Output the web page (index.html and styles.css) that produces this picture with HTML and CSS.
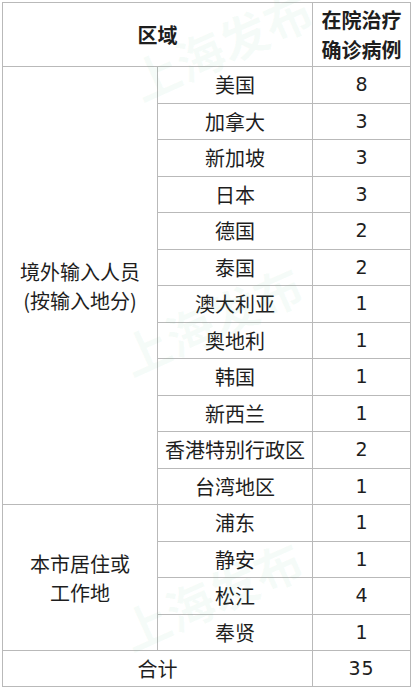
FILE: index.html
```html
<!DOCTYPE html>
<html lang="zh-CN">
<head>
<meta charset="utf-8">
<link rel="stylesheet" href="styles.css">
</head>
<body>
<div class="wrap">
<table class="tbl">
  <colgroup><col class="c1"><col class="c2"><col class="c3"></colgroup>
  <tr class="head"><th colspan="2">区域</th><th>在院治疗<br>确诊病例</th></tr>
  <tr><td class="grp" rowspan="12">境外输入人员<br>(按输入地分)</td><td>美国</td><td class="num">8</td></tr>
  <tr><td>加拿大</td><td class="num">3</td></tr>
  <tr><td>新加坡</td><td class="num">3</td></tr>
  <tr><td>日本</td><td class="num">3</td></tr>
  <tr><td>德国</td><td class="num">2</td></tr>
  <tr><td>泰国</td><td class="num">2</td></tr>
  <tr><td>澳大利亚</td><td class="num">1</td></tr>
  <tr><td>奥地利</td><td class="num">1</td></tr>
  <tr><td>韩国</td><td class="num">1</td></tr>
  <tr><td>新西兰</td><td class="num">1</td></tr>
  <tr><td>香港特别行政区</td><td class="num">2</td></tr>
  <tr><td>台湾地区</td><td class="num">1</td></tr>
  <tr><td class="grp" rowspan="4">本市居住或<br>工作地</td><td>浦东</td><td class="num">1</td></tr>
  <tr><td>静安</td><td class="num">1</td></tr>
  <tr><td>松江</td><td class="num">4</td></tr>
  <tr><td>奉贤</td><td class="num">1</td></tr>
  <tr class="total"><td colspan="2">合计</td><td class="num">35</td></tr>
</table>
<div class="wm wm1">上海发布</div>
<div class="wm wm2">上海发布</div>
<div class="wm wm3">上海发布</div>
</div>
</body>
</html>
```
FILE: styles.css
```css
html, body {
  margin: 0;
  padding: 0;
  background: #ffffff;
}
.wrap {
  position: relative;
  width: 412px;
  height: 689px;
  overflow: hidden;
  padding: 2px 0 0 2px;
  box-sizing: border-box;
}
.tbl {
  border-collapse: collapse;
  table-layout: fixed;
  width: 408px;
  font-family: "Noto Sans CJK SC", "Noto Sans", sans-serif;
  font-size: 20px;
  color: #1e1e1e;
  border: 1px solid #cfcfcf;
}
.c1 { width: 155px; }
.c2 { width: 155px; }
.c3 { width: 98px; }
.tbl th, .tbl td {
  border: 1px solid #b9b9b9;
  padding: 0;
  text-align: center;
  vertical-align: middle;
  line-height: 29px;
}
.tbl tr { height: 36.5px; }
.tbl tr.head { height: 64px; }
.tbl tr.total { height: 36px; }
.tbl th { font-weight: bold; line-height: 30px; }
.tbl .num {
  font-family: "DejaVu Sans", sans-serif;
  font-size: 19px;
}
.tbl tr.total .num { letter-spacing: 1px; }
.wm {
  position: absolute;
  font-family: "Noto Sans CJK SC", sans-serif;
  font-weight: bold;
  font-size: 48px;
  line-height: 48px;
  color: rgba(110, 200, 150, 0.06);
  transform: rotate(-24deg);
  white-space: nowrap;
  pointer-events: none;
}
.wm1 { left: 125px; top: 20px; }
.wm2 { left: 115px; top: 295px; }
.wm3 { left: 115px; top: 570px; }
```
